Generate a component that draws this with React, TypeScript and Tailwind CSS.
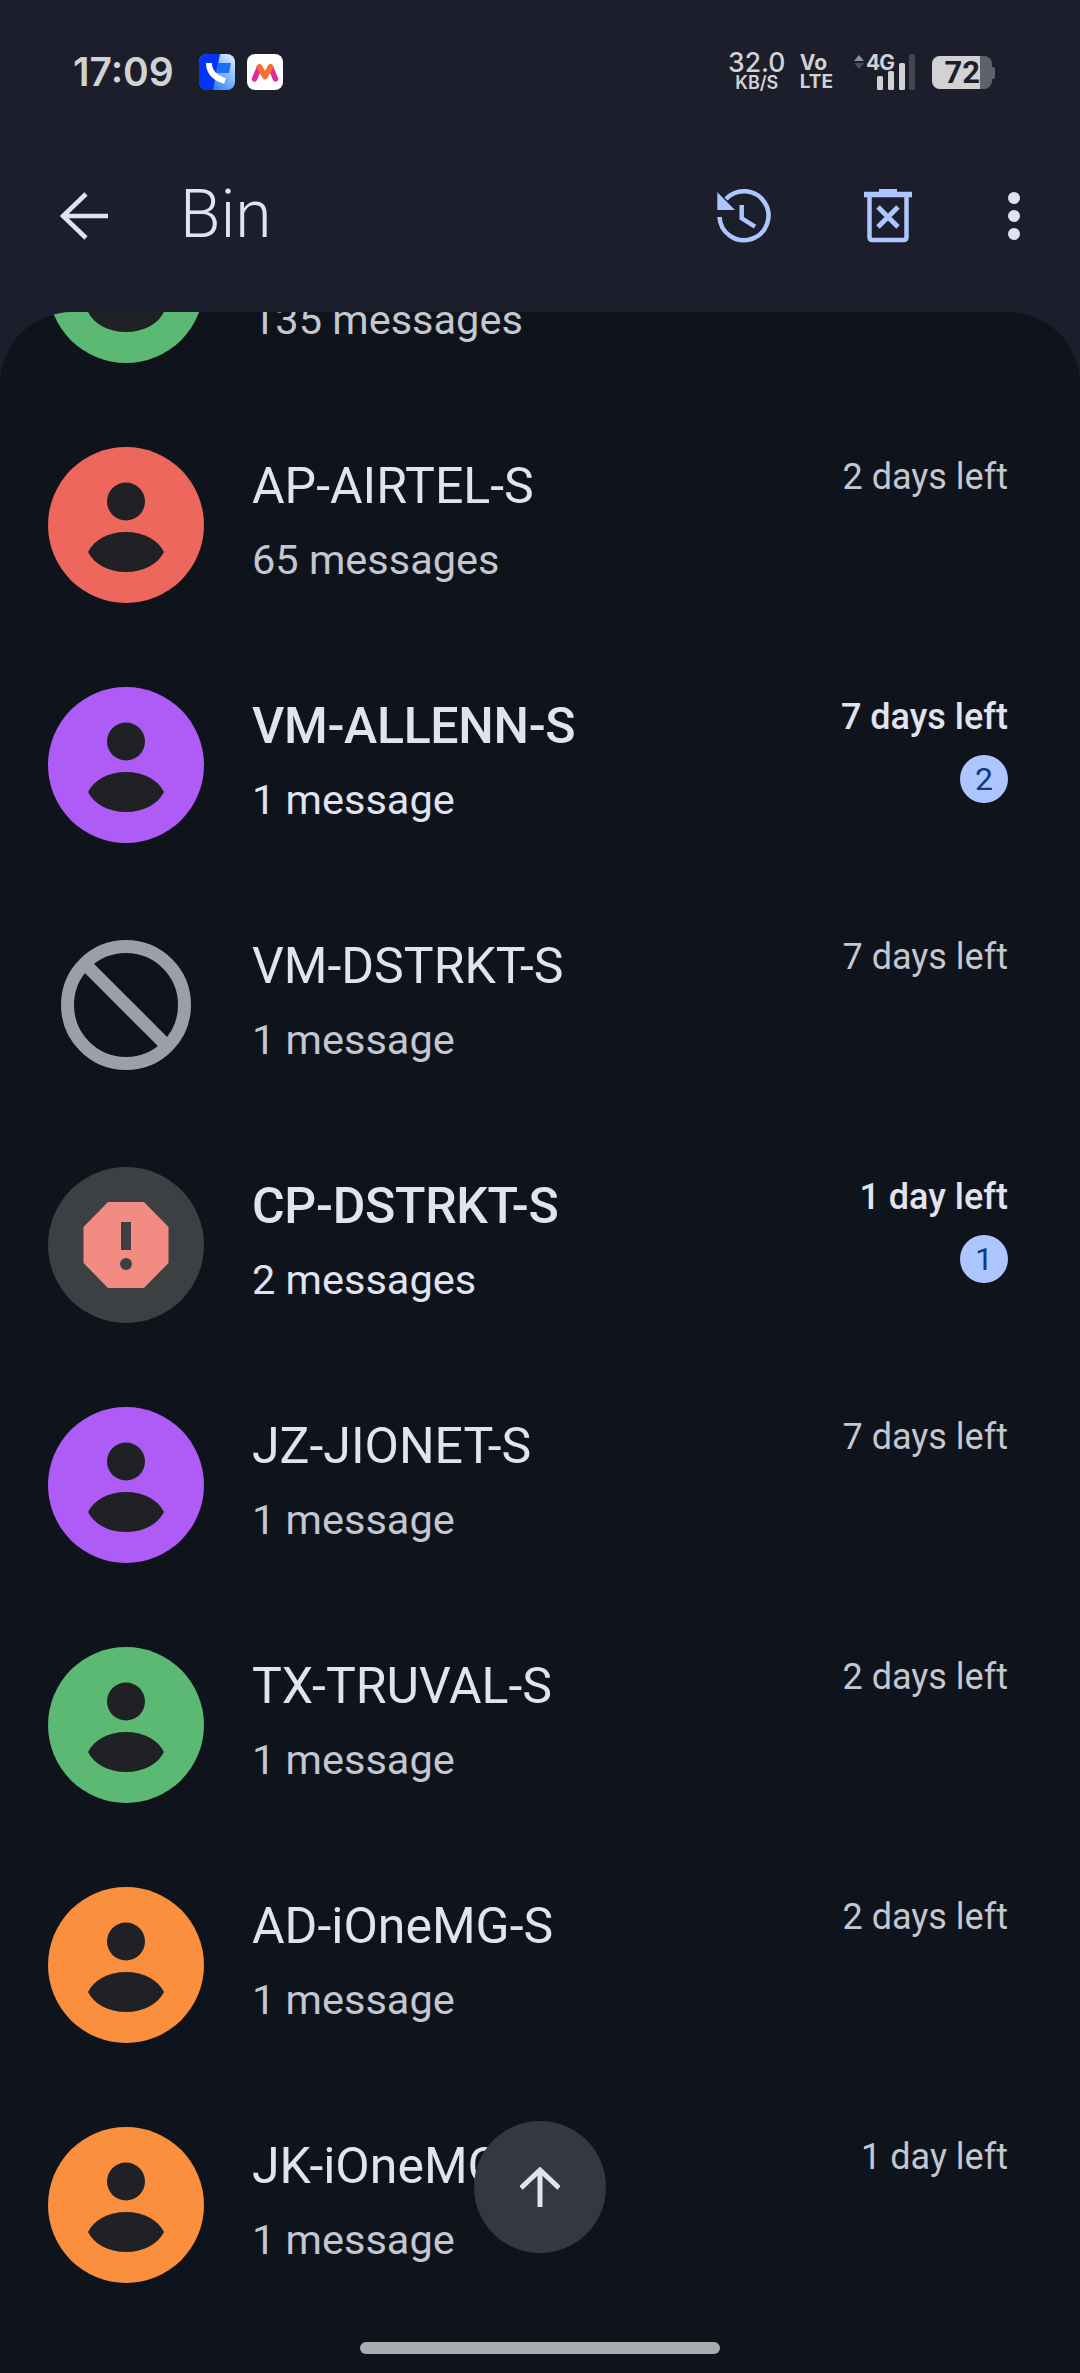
type Convo = {
  name: string;
  count: string;
  left: string;
  avatar: string;
  unread?: number;
  kind?: 'person' | 'blocked' | 'spam';
};

const CONVOS: Convo[] = [
  { name: '\u00a0', count: '135 messages', left: '\u00a0', avatar: 'bg-[#5bb974]' },
  { name: 'AP-AIRTEL-S', count: '65 messages', left: '2 days left', avatar: 'bg-[#ee675c]' },
  { name: 'VM-ALLENN-S', count: '1 message', left: '7 days left', avatar: 'bg-[#af5cf7]', unread: 2 },
  { name: 'VM-DSTRKT-S', count: '1 message', left: '7 days left', avatar: '', kind: 'blocked' },
  { name: 'CP-DSTRKT-S', count: '2 messages', left: '1 day left', avatar: 'bg-[#3c4043]', unread: 1, kind: 'spam' },
  { name: 'JZ-JIONET-S', count: '1 message', left: '7 days left', avatar: 'bg-[#af5cf7]' },
  { name: 'TX-TRUVAL-S', count: '1 message', left: '2 days left', avatar: 'bg-[#5bb974]' },
  { name: 'AD-iOneMG-S', count: '1 message', left: '2 days left', avatar: 'bg-[#fa903e]' },
  { name: 'JK-iOneMG-S', count: '1 message', left: '1 day left', avatar: 'bg-[#fa903e]' },
];

function Avatar({ convo }: { convo: Convo }) {
  if (convo.kind === 'blocked') {
    return (
      <svg viewBox="0 0 156 156" className="h-[156px] w-[156px] shrink-0">
        <circle cx="78" cy="78" r="58.5" fill="none" stroke="#9aa0a6" strokeWidth="13" />
        <path d="M37 37L119 119" stroke="#9aa0a6" strokeWidth="13" />
      </svg>
    );
  }
  if (convo.kind === 'spam') {
    return (
      <svg viewBox="0 0 156 156" className="h-[156px] w-[156px] shrink-0 rounded-full bg-[#3c4043]">
        <path d="M60 35H96L120.500 60V96L96 121H60L35.500 96V60Z" fill="#f28b82" />
        <rect x="73" y="55" width="10" height="28" fill="#3c4043" />
        <circle cx="78" cy="97" r="6" fill="#3c4043" />
      </svg>
    );
  }
  return (
    <svg viewBox="0 0 156 156" className={`h-[156px] w-[156px] shrink-0 rounded-full ${convo.avatar}`}>
      <circle cx="78" cy="54.500" r="19" fill="#202124" />
      <path d="M40 105C46 93 60 85 78 85C96 85 110 93 116 105C110 117 96 125 78 125C60 125 46 117 40 105Z" fill="#202124" />
    </svg>
  );
}

function Row({ convo }: { convo: Convo }) {
  const bold = !!convo.unread;
  return (
    <div className="flex h-[240px] items-center pl-[48px] pr-[72px]">
      <Avatar convo={convo} />
      <div className="mb-[4px] ml-[48px] flex min-w-0 flex-1 flex-col">
        <span className={`text-[50px] leading-[60px] text-[#e1e3f0] ${bold ? 'font-medium tracking-[-0.3px]' : 'font-normal'}`}>
          {convo.name}
        </span>
        <span className={`mt-[14px] text-[41.5px] leading-[60px] ${bold ? 'text-[#e1e3f0]' : 'text-[#c4c6d0]'}`}>
          {convo.count}
        </span>
      </div>
      <div className="flex flex-col items-end self-start pt-[48px]">
        <span className={`text-[36px] leading-[48px] ${bold ? 'font-medium text-[#e1e3f0]' : 'text-[#c4c6d0]'}`}>
          {convo.left}
        </span>
        {convo.unread && (
          <span className="mt-[14px] flex h-[48px] w-[48px] items-center justify-center rounded-full bg-[#adc6ff] text-[32px] leading-none text-[#0e3a7e]">
            {convo.unread}
          </span>
        )}
      </div>
    </div>
  );
}

function StatusBar() {
  return (
    <div className="flex h-[105px] items-start pl-[73px] pr-[85px] pt-[54px]">
      <span className="w-[100px] text-[39px] font-semibold leading-[36px] text-[#d2d2d2] font-['Inter',sans-serif]">17:09</span>
      <svg viewBox="0 0 36 36" className="ml-[26px] h-[36px] w-[36px] rounded-[8px]">
        <defs>
          <linearGradient id="dialer" x1="0" y1="1" x2="1" y2="0">
            <stop offset="0.2" stopColor="#2b7bf8" />
            <stop offset="0.9" stopColor="#cfe6ff" />
          </linearGradient>
        </defs>
        <rect width="36" height="36" fill="url(#dialer)" />
        <path d="M0 0H21L14 36H0Z" fill="#0434f5" />
        <path d="M19 9H32L30 19H18Z" fill="#1f6cf5" />
        <path d="M10 9C10 18 16 24 26 27" fill="none" stroke="#fff" strokeWidth="6" />
      </svg>
      <svg viewBox="0 0 36 36" className="ml-[12px] h-[36px] w-[36px] rounded-[8px] bg-white">
        <path d="M7.500 25L12.500 13M28.500 25L23.500 13" fill="none" stroke="#e6299a" strokeWidth="5.500" strokeLinecap="round" />
        <path d="M12.500 13L18 22.500L23.500 13" fill="none" stroke="#f5702a" strokeWidth="5.500" strokeLinecap="round" strokeLinejoin="round" />
      </svg>

      <div className="ml-auto flex items-start font-['Inter',sans-serif] text-[#d2d2d2]">
        <div className="-mt-[2px] flex w-[56px] flex-col items-center">
          <span className="text-[26.500px] font-medium leading-[21px]">32.0</span>
          <span className="mt-[2px] text-[18px] font-semibold leading-[16px]">KB/S</span>
        </div>
        <div className="-mt-[1px] ml-[15px] flex flex-col items-start">
          <span className="text-[21px] font-bold leading-[19px]">Vo</span>
          <span className="mt-[1px] text-[19px] font-bold leading-[17px]">LTE</span>
        </div>
        <div className="relative ml-[21px] h-[36px] w-[62px]">
          <svg viewBox="0 0 62 36" className="h-[36px] w-[62px]">
            <path d="M0 7L5 1L10 7Z" fill="#8c8f96" />
            <path d="M0 9L5 15L10 9Z" fill="#4a4d55" />
            <rect x="23" y="22" width="6" height="14" rx="1.500" fill="#d2d2d2" />
            <rect x="34" y="17" width="6" height="19" rx="1.500" fill="#d2d2d2" />
            <rect x="45" y="9" width="6" height="27" rx="1.500" fill="#d2d2d2" />
            <rect x="55" y="0" width="6" height="36" rx="1.500" fill="#44474f" />
          </svg>
          <span className="absolute left-[12px] top-0 text-[21px] font-bold leading-[18px] tracking-[-1px]">4G</span>
        </div>
        <div className="ml-[16px] mt-[2px] flex h-[33px] items-center">
          <div className="flex h-full w-[60px] overflow-hidden rounded-[8px] bg-[#5f626b]">
            <div className="flex h-full w-[48px] items-center justify-end bg-[#d2d2d2]">
              <span className="text-[31px] font-bold leading-[33px] text-[#1c1f2b] font-['Roboto',sans-serif]">72</span>
            </div>
          </div>
          <div className="h-[12px] w-[3px] rounded-r-[2px] bg-[#5f626b]" />
        </div>
      </div>
    </div>
  );
}

function Toolbar() {
  return (
    <div className="flex h-[207px] items-start pt-[87px]">
      <svg viewBox="0 0 48 48" className="ml-[60px] h-[48px] w-[48px]" fill="none" stroke="#e1e3f0" strokeWidth="4.500">
        <path d="M48 24H3M26 2L3 24L26 46" />
      </svg>
      <h1 className="ml-[72px] mt-[-15px] text-[66px] font-light leading-[76px] text-[#e1e3f0]">Bin</h1>
      <svg viewBox="0 0 60 60" className="ml-auto mt-[-6px] h-[60px] w-[60px]" fill="none" stroke="#adc6ff" strokeWidth="4.500">
        <path d="M5.500 31A24.500 24.500 0 1 0 12 13" />
        <path d="M3.300 6.300V24H21Z" fill="#adc6ff" stroke="none" />
        <path d="M27.700 19V32.300L41 40.700" />
      </svg>
      <svg viewBox="0 0 48 54" className="ml-[90px] mt-[-3px] h-[54px] w-[48px]" fill="none" stroke="#adc6ff" strokeWidth="4.500">
        <path d="M0 5.500H48M15 1.500H33" strokeWidth="5.500" />
        <path d="M5.500 8V48Q5.500 51 8.500 51H39.500Q42.500 51 42.500 48V8" />
        <path d="M14 18L34 38M34 18L14 38" strokeWidth="5" />
      </svg>
      <div className="ml-[96px] mr-[60px] flex flex-col gap-[6px]">
        <div className="h-[12px] w-[12px] rounded-full bg-[#e1e3f0]" />
        <div className="h-[12px] w-[12px] rounded-full bg-[#e1e3f0]" />
        <div className="h-[12px] w-[12px] rounded-full bg-[#e1e3f0]" />
      </div>
    </div>
  );
}

export default function App() {
  return (
    <div className="relative flex h-[2373px] w-[1080px] flex-col overflow-hidden bg-[#1c1f2b] font-['Roboto',sans-serif]">
      <StatusBar />
      <Toolbar />
      <div className="flex-1 overflow-hidden rounded-t-[72px] bg-[#0f131b]">
        <div className="mt-[-147px]">
          {CONVOS.map((c) => (
            <Row key={c.name + c.count} convo={c} />
          ))}
        </div>
      </div>

      <div className="absolute left-[474px] top-[2121px] flex h-[132px] w-[132px] items-center justify-center rounded-full bg-[#343843]">
        <svg viewBox="0 0 40 40" className="h-[40px] w-[40px]" fill="none" stroke="#e1e3f0" strokeWidth="5">
          <path d="M20 40V3M1 21L20 3L39 21" />
        </svg>
      </div>
      <div className="absolute left-[360px] top-[2342px] h-[12px] w-[360px] rounded-full bg-[#a9abae]" />
    </div>
  );
}
